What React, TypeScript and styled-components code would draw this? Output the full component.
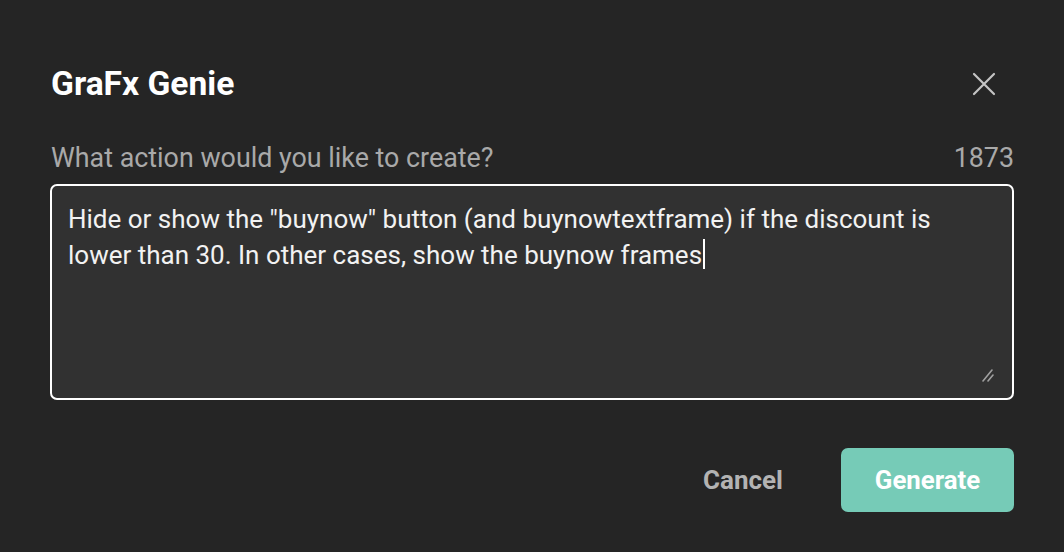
import React from "react";
import styled, { createGlobalStyle } from "styled-components";

const Global = createGlobalStyle`
  html, body { margin: 0; padding: 0; background: #252525; }
  body { font-family: Roboto, "Noto Sans", sans-serif; -webkit-font-smoothing: antialiased; }
  * { box-sizing: border-box; }
`;

const Dialog = styled.div`
  width: 1064px;
  height: 552px;
  background: #252525;
  padding: 64px 50px 40px 50px;
  display: flex;
  flex-direction: column;
`;

const Header = styled.div`
  display: flex;
  align-items: center;
  justify-content: space-between;
  height: 40px;
`;

const Title = styled.h1`
  margin: 0 0 0 1px;
  font-size: 33.6px;
  font-weight: 700;
  color: #ffffff;
  line-height: 40px;
`;

const CloseButton = styled.button`
  background: none;
  border: none;
  padding: 0;
  width: 28px;
  height: 28px;
  margin-right: 16px;
  display: flex;
  align-items: center;
  justify-content: center;
  cursor: pointer;
`;

const LabelRow = styled.div`
  margin-top: 40px;
  display: flex;
  justify-content: space-between;
  align-items: center;
  height: 28px;
`;

const Label = styled.span<{ $indent?: boolean }>`
  font-size: 26.85px;
  color: #a9a9a9;
  line-height: 28px;
  margin-left: ${(p) => (p.$indent ? "1px" : "0")};
`;

const Field = styled.div`
  position: relative;
  margin-top: 12px;
  height: 216px;
  border: 2px solid #ffffff;
  border-radius: 7px;
  background: #313131;
  padding: 15px 16px;
  font-size: 26px;
  line-height: 36px;
  color: #f2f2f2;
`;

const Caret = styled.span`
  display: inline-block;
  width: 2px;
  height: 30px;
  background: #ffffff;
  vertical-align: -5px;
  margin-left: 1px;
`;

const Resize = styled.svg`
  position: absolute;
  right: 18px;
  bottom: 16px;
`;

const Footer = styled.div`
  margin-top: 48px;
  display: flex;
  justify-content: flex-end;
  align-items: center;
  gap: 58px;
`;

const Button = styled.button<{ $primary?: boolean }>`
  font-family: Roboto, sans-serif;
  font-size: ${(p) => (p.$primary ? "25.8px" : "26px")};
  font-weight: 700;
  height: 64px;
  border: none;
  border-radius: 7px;
  cursor: pointer;
  padding: 0;
  width: ${(p) => (p.$primary ? "173px" : "auto")};
  background: ${(p) => (p.$primary ? "#76cbb7" : "transparent")};
  color: ${(p) => (p.$primary ? "#ffffff" : "#b3b3b3")};
`;

export default function App() {
  return (
    <>
      <Global />
      <Dialog>
        <Header>
          <Title>GraFx Genie</Title>
          <CloseButton aria-label="Close">
            <svg width="24" height="24" viewBox="0 0 24 24">
              <path d="M2 2 L22 22 M22 2 L2 22" stroke="#c4c4c4" strokeWidth="2.2" strokeLinecap="round" />
            </svg>
          </CloseButton>
        </Header>
        <LabelRow>
          <Label $indent>What action would you like to create?</Label>
          <Label>1873</Label>
        </LabelRow>
        <Field>
          Hide or show the "buynow" button (and buynowtextframe) if the discount is lower than 30. In other cases, show the buynow frames
          <Caret />
          <Resize width="12" height="14" viewBox="0 0 12 14">
            <path d="M1 13 L10 2 M6 13 L11 7" stroke="#a0a0a0" strokeWidth="1.6" strokeLinecap="round" />
          </Resize>
        </Field>
        <Footer>
          <Button>Cancel</Button>
          <Button $primary>Generate</Button>
        </Footer>
      </Dialog>
    </>
  );
}
